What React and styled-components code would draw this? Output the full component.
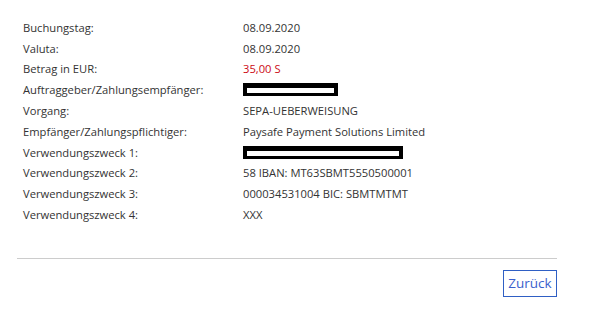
import React from "react";
import styled, { createGlobalStyle } from "styled-components";

const Global = createGlobalStyle`
  html, body { margin: 0; padding: 0; background: #fff; }
  body { font-family: "Open Sans", "Noto Sans", sans-serif; }
`;

const Page = styled.div`
  width: 540px;
  margin-left: 17px;
  padding-top: 17px;
`;

const Details = styled.dl`
  margin: 0;
  padding-left: 6px;
  display: grid;
  grid-template-columns: 220px 1fr;
  grid-auto-rows: 20.8px;
  align-items: center;
  font-size: 11.2px;
  color: #333;
`;

const Label = styled.dt`
  margin: 0;
  white-space: nowrap;
`;

const Value = styled.dd`
  margin: 0;
  white-space: nowrap;
  color: ${(p) => (p.$negative ? "#cc0a14" : "#333")};
`;

const Redacted = styled.span`
  display: block;
  box-sizing: border-box;
  width: ${(p) => p.$w}px;
  height: 13px;
  background: #fff;
  border: 4px solid #000;
  border-top-width: 5px;
  border-bottom-width: 3px;
`;

const Divider = styled.hr`
  margin: 33px 0 0;
  border: 0;
  border-top: 1px solid #ccc;
`;

const Actions = styled.div`
  display: flex;
  justify-content: flex-end;
  padding-top: 11px;
`;

const Button = styled.button`
  box-sizing: border-box;
  height: 27px;
  width: 54px;
  padding: 0;
  background: #fff;
  border: 1px solid #2f5fc4;
  color: #3a5fcd;
  font-family: "Open Sans", "Noto Sans", sans-serif;
  font-size: 13.5px;
  cursor: pointer;
`;

const rows = [
  ["Buchungstag:", "08.09.2020"],
  ["Valuta:", "08.09.2020"],
  ["Betrag in EUR:", "35,00 S", { negative: true }],
  ["Auftraggeber/Zahlungsempfänger:", null, { redact: 95 }],
  ["Vorgang:", "SEPA-UEBERWEISUNG"],
  ["Empfänger/Zahlungspflichtiger:", "Paysafe Payment Solutions Limited"],
  ["Verwendungszweck 1:", null, { redact: 160 }],
  ["Verwendungszweck 2:", "58 IBAN: MT63SBMT5550500001"],
  ["Verwendungszweck 3:", "000034531004 BIC: SBMTMTMT"],
  ["Verwendungszweck 4:", "XXX"],
];

export default function App() {
  return (
    <>
      <Global />
      <Page>
        <Details>
          {rows.map(([label, value, opts = {}]) => (
            <React.Fragment key={label}>
              <Label>{label}</Label>
              <Value $negative={opts.negative}>
                {opts.redact ? <Redacted $w={opts.redact} /> : value}
              </Value>
            </React.Fragment>
          ))}
        </Details>
        <Divider />
        <Actions>
          <Button>Zurück</Button>
        </Actions>
      </Page>
    </>
  );
}
